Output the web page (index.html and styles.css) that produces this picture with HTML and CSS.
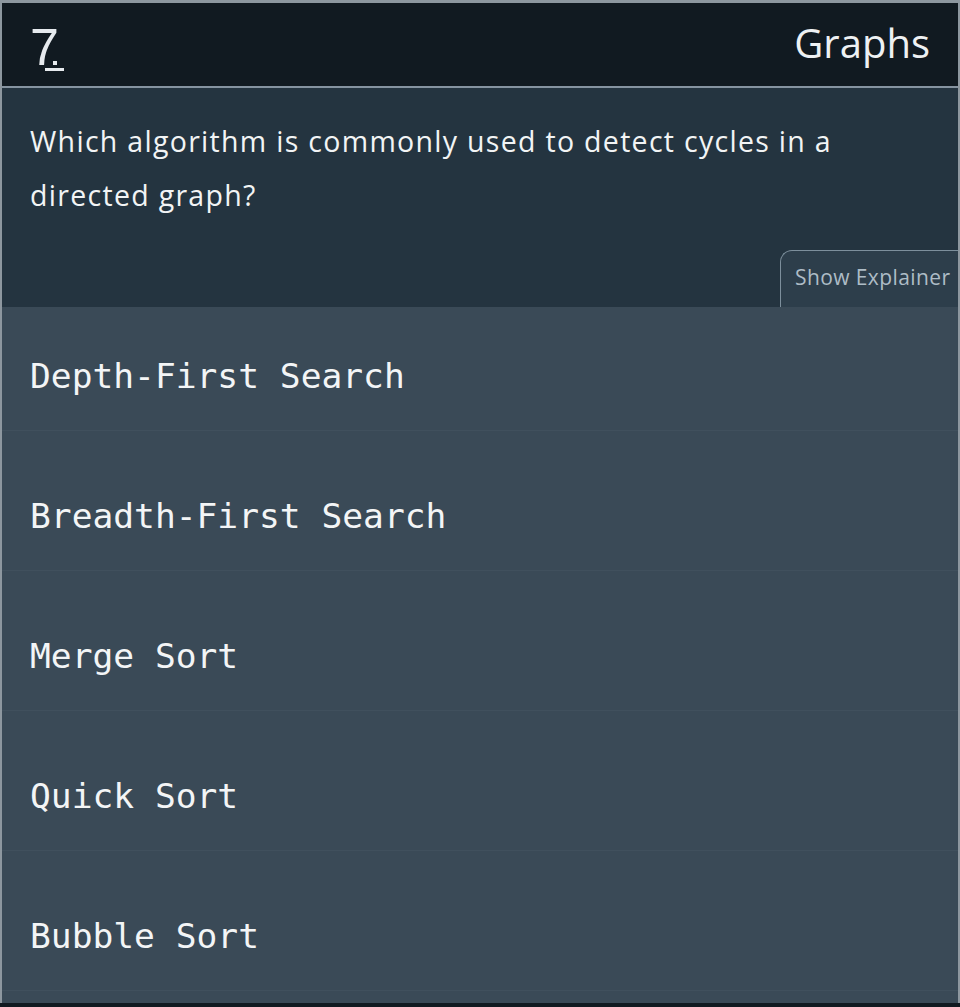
FILE: index.html
```html
<!DOCTYPE html>
<html>
<head>
<meta charset="utf-8">
<link rel="stylesheet" href="styles.css">
</head>
<body>
<div class="frame">
  <header class="topbar">
    <div class="logo"><span class="seven">7</span><span class="mark"><span class="dot"></span><span class="bar"></span></span></div>
    <div class="topic">Graphs</div>
  </header>
  <section class="question">
    <p class="qtext">Which algorithm is commonly used to detect cycles in a directed graph?</p>
    <div class="tabrow"><button class="explainer">Show Explainer</button></div>
  </section>
  <ul class="options">
    <li class="option first">Depth-First Search</li>
    <li class="option">Breadth-First Search</li>
    <li class="option">Merge Sort</li>
    <li class="option">Quick Sort</li>
    <li class="option">Bubble Sort</li>
  </ul>
</div>
</body>
</html>
```
FILE: styles.css
```css
html, body {
  margin: 0;
  padding: 0;
  background: #111a21;
  height: 1007px;
  overflow: hidden;
}
.frame {
  border-top: 3px solid #8d979f;
  border-left: 2px solid #8d979f;
  border-right: 2px solid #8d979f;
  height: 1003px;
  box-sizing: border-box;
  display: flex;
  flex-direction: column;
  background: #3a4a57;
}
.topbar {
  height: 83px;
  background: #111a21;
  border-bottom: 2px solid #8593a0;
  display: flex;
  align-items: center;
  justify-content: space-between;
  padding: 0 28px 0 28px;
  flex: none;
}
.logo {
  display: flex;
  align-items: flex-end;
  color: #e6eaee;
  font-family: "Liberation Sans", sans-serif;
  margin-top: 4px;
}
.seven {
  font-size: 52px;
  line-height: 44px;
  font-weight: 400;
}
.mark {
  display: flex;
  flex-direction: column;
  align-items: flex-end;
  margin-left: -14px;
  margin-bottom: -2px;
}
.dot {
  width: 4px;
  height: 4px;
  background: #e6eaee;
  margin-right: 7px;
  margin-bottom: 3px;
}
.bar {
  width: 19px;
  height: 3px;
  background: #e6eaee;
}
.topic {
  color: #eef1f3;
  font-family: "Open Sans", sans-serif;
  font-size: 40px;
  margin-top: -4px;
}
.question {
  background: #243440;
  padding: 0 0 0 28px;
  height: 219px;
  flex: none;
  display: flex;
  flex-direction: column;
  box-sizing: border-box;
}
.qtext {
  margin: 26px 0 0 0;
  color: #f2f4f5;
  font-family: "Open Sans", sans-serif;
  font-size: 28.5px;
  letter-spacing: 1.3px;
  line-height: 54px;
  max-width: 840px;
}
.tabrow {
  margin-top: auto;
  display: flex;
  justify-content: flex-end;
}
.explainer {
  background: #2d3e4b;
  border: 1.5px solid #7d8f9c;
  border-bottom: none;
  border-right: none;
  border-radius: 12px 0 0 0;
  color: #aebcc6;
  font-family: "Open Sans", sans-serif;
  font-size: 21px;
  letter-spacing: 0.4px;
  height: 57px;
  width: 178px;
  padding: 0 0 4px 14px;
  text-align: left;
  white-space: nowrap;
  overflow: hidden;
}
.options {
  list-style: none;
  margin: 0;
  padding: 0;
}
.option {
  height: 140px;
  border-bottom: 1px solid #45566380;
  display: flex;
  align-items: flex-end;
  padding: 0 0 36px 28px;
  box-sizing: border-box;
  color: #f3f5f6;
  font-family: "DejaVu Sans Mono", monospace;
  font-size: 34.6px;
  line-height: 36px;
}
.option.first {
  height: 124px;
}
```
